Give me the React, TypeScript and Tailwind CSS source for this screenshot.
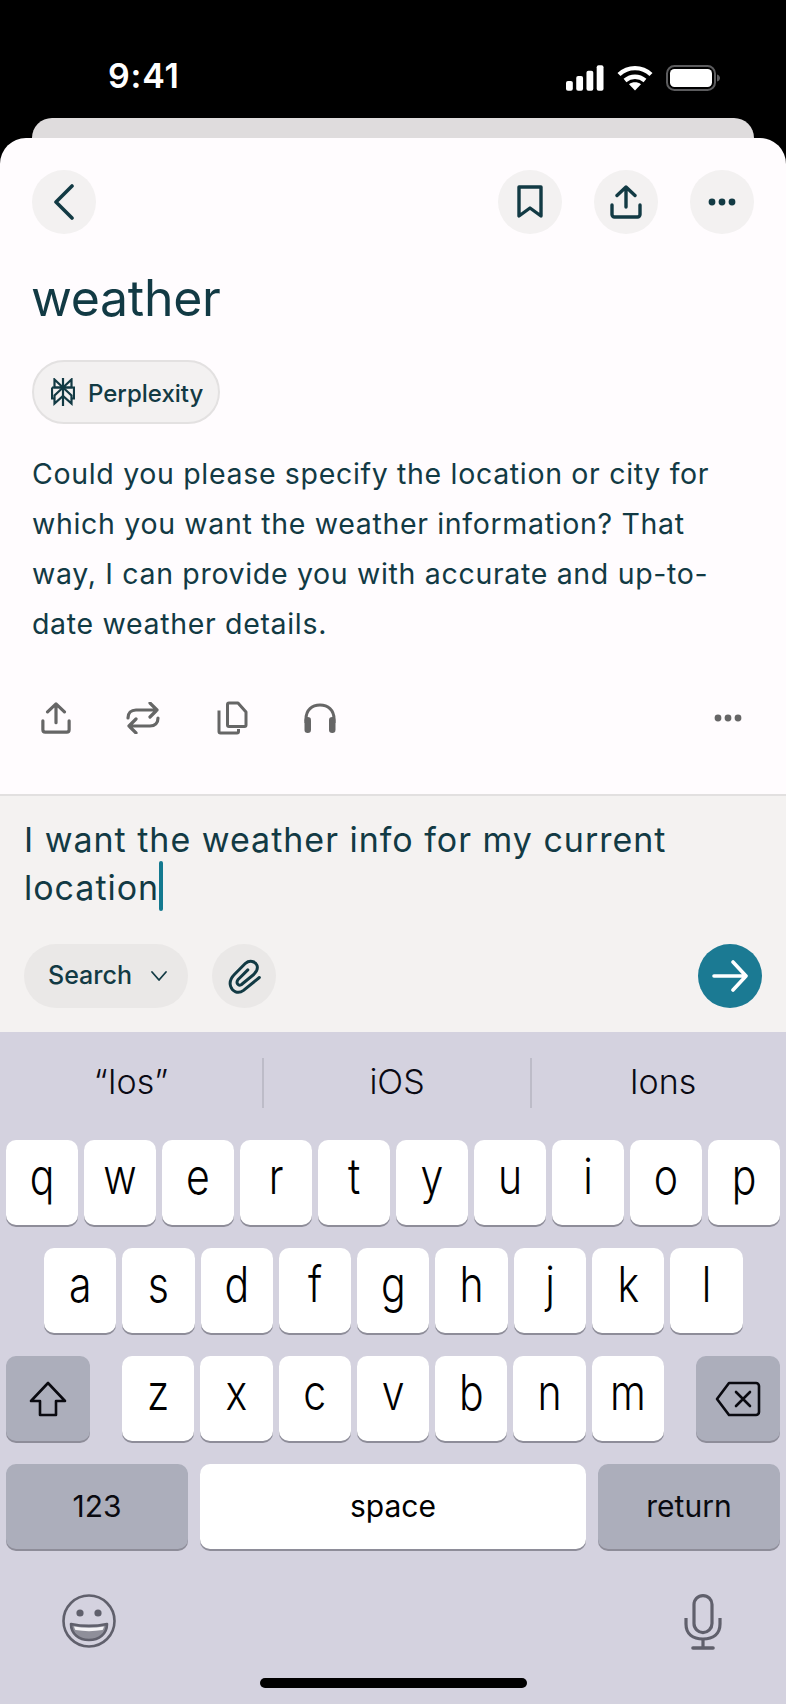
import React from "react";

const ink = "#123a44";

function RoundBtn({ children, className = "" }: { children: React.ReactNode; className?: string }) {
  return (
    <div className={`w-[64px] h-[64px] rounded-full bg-[#f3f1f1] flex items-center justify-center ${className}`}>
      {children}
    </div>
  );
}

function ShareIcon({ color, w = 32, h = 34, sw = 3.4 }: { color: string; w?: number; h?: number; sw?: number }) {
  return (
    <svg width={w} height={h} viewBox="0 0 32 34" fill="none" stroke={color} strokeWidth={sw} strokeLinecap="round" strokeLinejoin="round">
      <path d="M16 22V2.500M7 10.500l9-8.500 9 8.500" />
      <path d="M2 20v9.500a2.500 2.500 0 0 0 2.500 2.500h23a2.500 2.500 0 0 0 2.500-2.500V20" />
    </svg>
  );
}

function Dots({ color, w = 28 }: { color: string; w?: number }) {
  return (
    <svg width={w} height="10" viewBox="0 0 28 10" fill={color}>
      <circle cx="4" cy="5" r="3.400" />
      <circle cx="14" cy="5" r="3.400" />
      <circle cx="24" cy="5" r="3.400" />
    </svg>
  );
}

function PerplexityLogo() {
  return (
    <svg width="24" height="28" viewBox="0 0 24 28" fill="none" stroke={ink} strokeWidth="2.200" strokeLinejoin="miter">
      <path d="M12 0v28" />
      <path d="M3.500 1.500L12 9.500l8.500-8L20.500 9.500H3.500z" />
      <path d="M1 9.500h22v11h-2.500" />
      <path d="M1 9.500v11h2.500" />
      <path d="M12 9.500L3.500 17.500v8L12 18l8.500 7.500v-8z" />
    </svg>
  );
}

function Key({ children, className = "" }: { children: React.ReactNode; className?: string }) {
  return (
    <div className={`h-[85px] rounded-[10px] bg-white shadow-[0_2px_0_#8e8d99] flex items-center justify-center text-[41px] text-black font-light pb-[11px] ${className}`}>
      <span className="inline-block scale-y-[1.2]">{children}</span>
    </div>
  );
}

function DarkKey({ children, className = "" }: { children: React.ReactNode; className?: string }) {
  return (
    <div className={`h-[85px] rounded-[10px] bg-[#acaebb] shadow-[0_2px_0_#8e8d99] flex items-center justify-center text-[30px] text-[#0a0a10] ${className}`}>
      {children}
    </div>
  );
}

export default function App() {
  const row1 = ["q", "w", "e", "r", "t", "y", "u", "i", "o", "p"];
  const row2 = ["a", "s", "d", "f", "g", "h", "j", "k", "l"];
  const row3 = ["z", "x", "c", "v", "b", "n", "m"];
  return (
    <div className="w-[786px] h-[1704px] bg-black flex flex-col overflow-hidden font-['Inter',sans-serif]">
      {/* status bar */}
      <div className="h-[118px] flex justify-between items-start pl-[108px] pr-[66px] pt-[56px] shrink-0">
        <div className="text-[34px] leading-[40px] font-semibold text-white tracking-[0.8px]">9:41</div>
        <div className="flex items-center gap-[13px] mt-[9px]">
          <svg width="38" height="26" viewBox="0 0 39 26" fill="#fff">
            <rect x="0" y="16" width="7" height="10" rx="2" />
            <rect x="10.500" y="11" width="7" height="15" rx="2" />
            <rect x="21" y="5.500" width="7" height="20.500" rx="2" />
            <rect x="31.500" y="0" width="7" height="26" rx="2" />
          </svg>
          <svg width="36" height="26" viewBox="0 0 36 26" fill="none" stroke="#fff" strokeWidth="4.400">
            <path d="M2 9.500C11 1 25 1 34 9.500" />
            <path d="M8 15.500c6-5 14-5 20 0" />
            <path d="M18 25.500l-6-6.300c3.500-2.600 8.500-2.600 12 0z" fill="#fff" stroke="none" />
          </svg>
          <svg width="54" height="26" viewBox="0 0 54 26" fill="none">
            <rect x="1" y="1" width="48" height="24" rx="7.500" stroke="#5c5c5e" strokeWidth="2" />
            <rect x="4" y="4" width="42" height="18" rx="4.500" fill="#fff" />
            <path d="M51 9.500c2 .5 3 2 3 3.500s-1 3-3 3.500z" fill="#5c5c5e" />
          </svg>
        </div>
      </div>
      <div className="h-[20px] mx-[32px] bg-[#dfdcdd] rounded-t-[20px] shrink-0" />

      {/* sheet */}
      <div className="h-[656px] shrink-0 bg-[#fffcfe] rounded-t-[26px] px-[32px] pt-[32px] flex flex-col">
        <div className="flex justify-between">
          <RoundBtn>
            <svg width="22" height="36" viewBox="0 0 22 36" fill="none" stroke={ink} strokeWidth="3.600" strokeLinecap="round" strokeLinejoin="round">
              <path d="M19 2L3 18l16 16" />
            </svg>
          </RoundBtn>
          <div className="flex">
            <RoundBtn>
              <svg width="26" height="34" viewBox="0 0 26 34" fill="none" stroke={ink} strokeWidth="3.400" strokeLinejoin="round">
                <path d="M2 2h22v29l-11-8-11 8z" />
              </svg>
            </RoundBtn>
            <RoundBtn className="ml-[32px]"><ShareIcon color={ink} /></RoundBtn>
            <RoundBtn className="ml-[32px]"><Dots color={ink} /></RoundBtn>
          </div>
        </div>
        <h1 className="text-[50px] leading-[60px] text-[#123a44] mt-[34px] font-normal tracking-[-0.3px] -ml-[1px]">weather</h1>
        <div className="mt-[32px] w-[188px] h-[64px] rounded-full bg-[#f3f1f1] border-2 border-[#e3e1e1] flex items-center pl-[17px] gap-[13px]">
          <PerplexityLogo />
          <span className="text-[24px] font-medium text-[#123a44] mt-[3px]">Perplexity</span>
        </div>
        <div className="mt-[25px] text-[28.5px] leading-[50px] text-[#123a44] tracking-[0.67px] whitespace-nowrap">
          <div>Could you please specify the location or city for</div>
          <div>which you want the weather information? That</div>
          <div>way, I can provide you with accurate and up-to-</div>
          <div>date weather details.</div>
        </div>
        <div className="mt-[52px] flex items-center pl-[9px] pr-[12px]">
          <ShareIcon color="#666666" w={30} h={32} />
          <svg className="ml-[55px]" width="34" height="32" viewBox="0 0 34 32" fill="none" stroke="#666" strokeWidth="3.200" strokeLinecap="round" strokeLinejoin="round">
            <path d="M2 16c0-5 3-8 8-8h21M24 1l7 7-7 7" />
            <path d="M32 16c0 5-3 8-8 8H3M10 17l-7 7 7 7" />
          </svg>
          <svg className="ml-[57px]" width="31" height="34" viewBox="0 0 31 34" fill="none" stroke="#666" strokeWidth="3" strokeLinejoin="round">
            <path d="M12 2h9l8 9v13a1.500 1.500 0 0 1-1.500 1.500H12A1.500 1.500 0 0 1 10.500 24V3.500A1.500 1.500 0 0 1 12 2z" />
            <path d="M2 9.500v21A1.500 1.500 0 0 0 3.500 32H20a1.500 1.500 0 0 0 1.500-1.500V28" />
          </svg>
          <svg className="ml-[55px]" width="34" height="30" viewBox="0 0 34 30" fill="none">
            <path d="M3 20V16C3 7 9 2 17 2s14 5 14 14v4" stroke="#666" strokeWidth="3" />
            <rect x="1.500" y="14" width="6.500" height="16" rx="3.200" fill="#666" />
            <rect x="26" y="14" width="6.500" height="16" rx="3.200" fill="#666" />
          </svg>
          <div className="ml-auto"><Dots color="#666666" /></div>
        </div>
      </div>

      {/* input */}
      <div className="h-[238px] shrink-0 bg-[#f4f2f1] border-t-2 border-[#e2e0e0] px-[24px] flex flex-col">
        <div className="mt-[20px] text-[34px] leading-[48px] text-[#123a44] tracking-[0.98px] whitespace-nowrap">
          <div>I want the weather info for my current</div>
          <div className="flex items-center">
            location
            <span className="inline-block w-[4px] h-[50px] -mt-[5px] bg-[#13798f] rounded-full" />
          </div>
        </div>
        <div className="mt-[32px] flex items-center">
          <div className="w-[164px] h-[64px] rounded-full bg-[#eae8e7] flex items-center pl-[24px] gap-[18px]">
            <span className="text-[25px] font-medium text-[#123a44]">Search</span>
            <svg width="18" height="12" viewBox="0 0 18 12" fill="none" stroke={ink} strokeWidth="1.800" strokeLinecap="round" strokeLinejoin="round">
              <path d="M2 2l7 8 7-8" />
            </svg>
          </div>
          <div className="ml-[24px] w-[64px] h-[64px] rounded-full bg-[#eae8e7] flex items-center justify-center">
            <svg width="33" height="37" viewBox="65 50 100 110" fill="none" stroke={ink} strokeWidth="9" strokeLinecap="round" strokeLinejoin="round">
              <path d="M160 108L112 147C95 160 78 150 73 135C68 120 75 108 85 98L118 65C130 55 148 58 153 72C157 84 150 92 143 99L105 130C97 135 88 125 95 115L125 85" />
            </svg>
          </div>
          <div className="ml-auto w-[64px] h-[64px] rounded-full bg-[#1b7a93] flex items-center justify-center">
            <svg width="36" height="32" viewBox="0 0 36 32" fill="none" stroke="#fff" strokeWidth="3.600" strokeLinecap="round" strokeLinejoin="round">
              <path d="M2 16h31M21 2l13 14-13 14" />
            </svg>
          </div>
        </div>
      </div>

      {/* keyboard */}
      <div className="flex-1 bg-[#d4d2df] flex flex-col relative">
        <div className="h-[108px] shrink-0 flex items-start pt-[26px] text-[34px] text-[#0a0a14] font-light">
          <div className="w-[262px] h-[46px] flex items-center justify-center">“Ios”</div>
          <div className="w-[2px] h-[50px] bg-[#bdbcc8]" />
          <div className="w-[266px] h-[46px] flex items-center justify-center">iOS</div>
          <div className="w-[2px] h-[50px] bg-[#bdbcc8]" />
          <div className="flex-1 h-[46px] flex items-center justify-center pl-[8px]">Ions</div>
        </div>
        <div className="flex gap-[6px] px-[6px]">
          {row1.map((k) => <Key key={k} className="w-[72px]">{k}</Key>)}
        </div>
        <div className="flex gap-[6px] pl-[44px] mt-[23px]">
          {row2.map((k) => <Key key={k} className="w-[72.300px]">{k}</Key>)}
        </div>
        <div className="flex px-[6px] mt-[23px]">
          <DarkKey className="w-[84px]">
            <svg width="38" height="36" viewBox="0 0 38 36" fill="none" stroke="#0a0a10" strokeWidth="2.600" strokeLinejoin="round">
              <path d="M19 2L2 20h9v14h16V20h9z" />
            </svg>
          </DarkKey>
          <div className="flex gap-[6px] ml-[32px]">
            {row3.map((k) => <Key key={k} className="w-[72.300px]">{k}</Key>)}
          </div>
          <DarkKey className="w-[84px] ml-auto">
            <svg width="46" height="36" viewBox="0 0 46 36" fill="none" stroke="#0a0a10" strokeWidth="2.600" strokeLinejoin="round" strokeLinecap="round">
              <path d="M14 2h27a3 3 0 0 1 3 3v26a3 3 0 0 1-3 3H14L2 18z" />
              <path d="M21 11l14 14M35 11L21 25" />
            </svg>
          </DarkKey>
        </div>
        <div className="flex px-[6px] mt-[23px]">
          <DarkKey className="w-[182px] text-[30px]">123</DarkKey>
          <div className="w-[386px] ml-[12px] h-[85px] rounded-[10px] bg-white shadow-[0_2px_0_#8e8d99] flex items-center justify-center text-[30px] text-black">space</div>
          <DarkKey className="w-[182px] ml-[12px] text-[30px]">return</DarkKey>
        </div>
        <div className="flex justify-between items-start pl-[62px] pr-[64px] mt-[45px]">
          <svg width="54" height="54" viewBox="0 0 54 54" fill="none">
            <ellipse cx="27" cy="27" rx="25.500" ry="25.500" stroke="#60606c" strokeWidth="2.600" />
            <circle cx="18" cy="19" r="3.600" fill="#60606c" />
            <circle cx="36" cy="19" r="3.600" fill="#60606c" />
            <path d="M9 30c12 2.500 24 2.500 36 0 0 10-8 16-18 16S9 40 9 30z" fill="#8f8f9a" stroke="#60606c" strokeWidth="2.600" strokeLinejoin="round" />
            <path d="M12 32.500c10 1.800 20 1.800 30 0-.5 1.800-1 2.800-1.500 3.500-9 1.500-18 1.500-27 0-.5-.7-1-1.700-1.500-3.500z" fill="#f4f3f6" />
          </svg>
          <svg width="38" height="56" viewBox="0 0 38 56" fill="none" stroke="#60606c" strokeWidth="3.200">
            <rect x="10" y="1.600" width="18" height="37" rx="9" />
            <path d="M2 24v6c0 10 7 15 17 15s17-5 17-15v-6" />
            <path d="M19 45v8" />
            <path d="M9 54h20" strokeWidth="3.600" strokeLinecap="round" />
          </svg>
        </div>
        <div className="absolute left-[260px] top-[646px] w-[267px] h-[10px] rounded-full bg-black" />
      </div>
    </div>
  );
}
